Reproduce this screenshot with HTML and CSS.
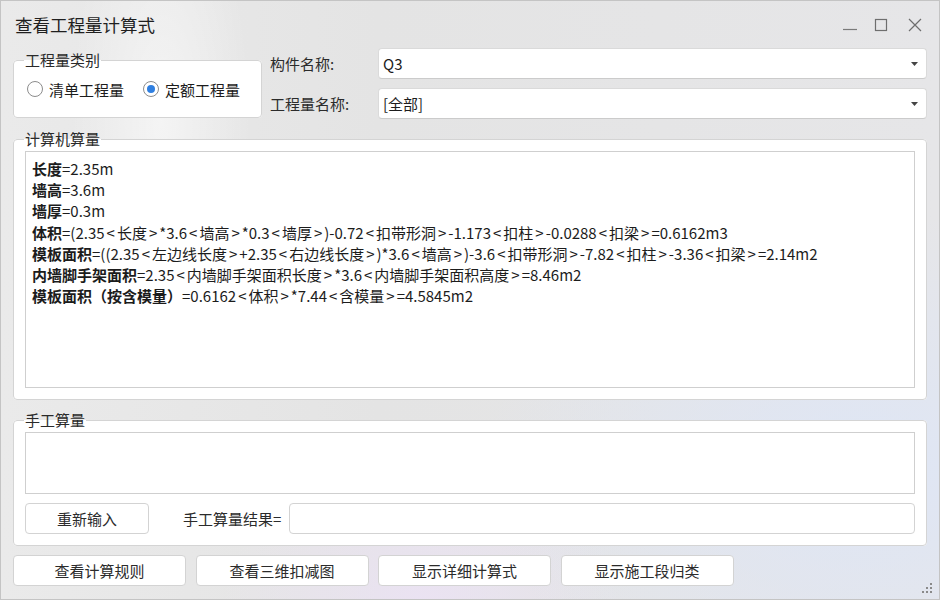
FILE: index.html
```html
<!DOCTYPE html>
<html lang="zh-CN">
<head>
<meta charset="utf-8">
<title>查看工程量计算式</title>
<link rel="stylesheet" href="styles.css">
</head>
<body>
<div class="window">
  <div class="titlebar">
    <span class="title">查看工程量计算式</span>
    <div class="controls">
      <svg class="ctl ctl-min" width="14" height="14" viewBox="0 0 14 14"><path d="M0 11.5H14" stroke="#7a7a7a" stroke-width="1.2" fill="none"/></svg>
      <svg class="ctl ctl-max" width="14" height="14" viewBox="0 0 14 14"><rect x="1.5" y="1.5" width="11" height="11" stroke="#6e6e6e" stroke-width="1.2" fill="none"/></svg>
      <svg class="ctl ctl-close" width="14" height="14" viewBox="0 0 14 14"><path d="M1 1L13 13M13 1L1 13" stroke="#6e6e6e" stroke-width="1.2" fill="none"/></svg>
    </div>
  </div>

  <div class="top">
    <fieldset class="group type-group">
      <legend>工程量类别</legend>
      <div class="radios">
        <label class="radio"><span class="dot"></span>清单工程量</label>
        <label class="radio checked"><span class="dot"></span>定额工程量</label>
      </div>
    </fieldset>
    <div class="fields">
      <div class="field">
        <span class="flabel">构件名称:</span>
        <div class="select"><span>Q3</span><svg class="arrow" width="7" height="4" viewBox="0 0 7 4"><path d="M0 0H7L3.5 4Z" fill="#444"/></svg></div>
      </div>
      <div class="field">
        <span class="flabel">工程量名称:</span>
        <div class="select"><span>[全部]</span><svg class="arrow" width="7" height="4" viewBox="0 0 7 4"><path d="M0 0H7L3.5 4Z" fill="#444"/></svg></div>
      </div>
    </div>
  </div>

  <fieldset class="group calc">
    <legend>计算机算量</legend>
    <div class="textbox calc-box">
      <div class="line"><b>长度</b>=2.35m</div>
      <div class="line"><b>墙高</b>=3.6m</div>
      <div class="line"><b>墙厚</b>=0.3m</div>
      <div class="line"><b>体积</b>=(2.35<span class="ab">&lt;</span>长度<span class="ab">&gt;</span>*3.6<span class="ab">&lt;</span>墙高<span class="ab">&gt;</span>*0.3<span class="ab">&lt;</span>墙厚<span class="ab">&gt;</span>)-0.72<span class="ab">&lt;</span>扣带形洞<span class="ab">&gt;</span>-1.173<span class="ab">&lt;</span>扣柱<span class="ab">&gt;</span>-0.0288<span class="ab">&lt;</span>扣梁<span class="ab">&gt;</span>=0.6162m3</div>
      <div class="line"><b>模板面积</b>=((2.35<span class="ab">&lt;</span>左边线长度<span class="ab">&gt;</span>+2.35<span class="ab">&lt;</span>右边线长度<span class="ab">&gt;</span>)*3.6<span class="ab">&lt;</span>墙高<span class="ab">&gt;</span>)-3.6<span class="ab">&lt;</span>扣带形洞<span class="ab">&gt;</span>-7.82<span class="ab">&lt;</span>扣柱<span class="ab">&gt;</span>-3.36<span class="ab">&lt;</span>扣梁<span class="ab">&gt;</span>=2.14m2</div>
      <div class="line"><b>内墙脚手架面积</b>=2.35<span class="ab">&lt;</span>内墙脚手架面积长度<span class="ab">&gt;</span>*3.6<span class="ab">&lt;</span>内墙脚手架面积高度<span class="ab">&gt;</span>=8.46m2</div>
      <div class="line"><b>模板面积（按含模量）</b>=0.6162<span class="ab">&lt;</span>体积<span class="ab">&gt;</span>*7.44<span class="ab">&lt;</span>含模量<span class="ab">&gt;</span>=4.5845m2</div>
    </div>
  </fieldset>

  <fieldset class="group manual">
    <legend>手工算量</legend>
    <div class="textbox manual-box"></div>
    <div class="manual-row">
      <button class="btn reinput">重新输入</button>
      <span class="result-label">手工算量结果=</span>
      <div class="input"></div>
    </div>
  </fieldset>

  <div class="actions">
    <button class="btn action">查看计算规则</button>
    <button class="btn action">查看三维扣减图</button>
    <button class="btn action">显示详细计算式</button>
    <button class="btn action">显示施工段归类</button>
  </div>

  <svg class="grip" width="10" height="10" viewBox="0 0 10 10">
    <rect x="8" y="0" width="2" height="2" fill="#8a8a8a"/>
    <rect x="4" y="4" width="2" height="2" fill="#8a8a8a"/>
    <rect x="8" y="4" width="2" height="2" fill="#8a8a8a"/>
    <rect x="0" y="8" width="2" height="2" fill="#8a8a8a"/>
    <rect x="4" y="8" width="2" height="2" fill="#8a8a8a"/>
    <rect x="8" y="8" width="2" height="2" fill="#8a8a8a"/>
  </svg>
</div>
</body>
</html>
```

FILE: styles.css
```css
* { box-sizing: border-box; }

html, body {
  margin: 0;
  padding: 0;
  width: 940px;
  height: 600px;
  overflow: hidden;
}

body {
  font-family: "Noto Sans CJK SC", "Noto Sans", sans-serif;
  font-size: 15px;
  color: #1c1c1c;
}

.window {
  position: relative;
  width: 940px;
  height: 600px;
  border: 1px solid #c4c4c4;
  padding: 0 12px;
  display: flex;
  flex-direction: column;
  background:
    radial-gradient(ellipse 90px 260px at 160px 120px, rgba(255,255,255,0.55), rgba(255,255,255,0) 100%),
    radial-gradient(ellipse 380px 260px at 860px 470px, rgba(222,230,246,0.95), rgba(222,230,246,0) 100%),
    radial-gradient(ellipse 200px 140px at 420px 600px, rgba(236,226,246,0.8), rgba(236,226,246,0) 100%),
    linear-gradient(90deg, #eaeaea 0%, #e4e4e4 40%, #e6e6e8 100%);
}

/* title bar */
.titlebar {
  height: 47px;
  display: flex;
  align-items: center;
  justify-content: space-between;
  padding-left: 2px;
}
.title {
  font-size: 17.5px;
  color: #1f1f1f;
}
.controls {
  display: flex;
  align-items: center;
  margin-right: 5px;
  margin-top: 1px;
}
.ctl { display: block; }
.ctl-min { margin-right: 17px; }
.ctl-max { margin-right: 20px; }

/* group boxes */
.group {
  margin: 0;
  min-width: 0;
  border: 1px solid #d4d4d4;
  border-radius: 4px;
  background: #ffffff;
  padding: 2px 11px 11px 11px;
}
.group legend {
  padding: 0 1px;
  margin-left: -1px;
  line-height: 20px;
  font-size: 15px;
  color: #2a2a2a;
}

/* top section */
.top {
  display: flex;
  align-items: flex-start;
}
.type-group {
  width: 249px;
  margin-top: 2px;
  padding: 9px 11px 18px 11px;
}
.radios {
  display: flex;
  align-items: center;
  height: 20px;
}
.radio {
  display: flex;
  align-items: center;
  color: #1c1c1c;
}
.radio:first-child { margin-left: 2px; margin-right: 19px; }
.dot {
  width: 16px;
  height: 16px;
  border-radius: 50%;
  border: 1px solid #8c8c8c;
  background: #fff;
  margin-right: 6px;
  display: flex;
  align-items: center;
  justify-content: center;
}
.checked .dot::after {
  content: "";
  width: 8px;
  height: 8px;
  border-radius: 50%;
  background: #2f7fe0;
}

.fields {
  flex: 1;
  margin-left: 8px;
  display: flex;
  flex-direction: column;
  gap: 9px;
}
.field {
  display: flex;
  align-items: center;
}
.flabel {
  width: 108px;
  color: #2b2b2b;
}
.select {
  flex: 1;
  height: 31px;
  background: #fff;
  border: 1px solid #dadada;
  border-bottom-color: #cbcbcb;
  border-radius: 4px;
  display: flex;
  align-items: center;
  justify-content: space-between;
  padding: 0 8px 0 4px;
  color: #1c1c1c;
}
.arrow { display: block; margin-top: 1px; }

/* calculation area */
.calc {
  margin-top: 10px;
}
.textbox {
  background: #fff;
  border: 1px solid #cfcfcf;
}
.calc-box {
  height: 237px;
  padding: 6px 6px;
}
.line {
  line-height: 21.2px;
  white-space: nowrap;
  color: #1c1c1c;
}
.line b {
  font-weight: 700;
}
.ab {
  padding: 0 2px;
}

/* manual area */
.manual {
  margin-top: 10px;
}
.manual-box {
  height: 62px;
}
.manual-row {
  display: flex;
  align-items: center;
  margin-top: 9px;
}
.btn {
  font-family: inherit;
  font-size: 15px;
  color: #2b2b2b;
  background: #fff;
  border: 1px solid #d3d3d3;
  border-radius: 4px;
  height: 31px;
  padding: 0;
  cursor: default;
}
.reinput {
  width: 124px;
}
.result-label {
  margin-left: 34px;
  margin-right: 8px;
  color: #2b2b2b;
}
.input {
  flex: 1;
  height: 31px;
  background: #fff;
  border: 1px solid #d3d3d3;
  border-radius: 4px;
}

/* bottom buttons */
.actions {
  display: flex;
  gap: 9.5px;
  margin-top: 9px;
}
.action {
  width: 173px;
}

.grip {
  position: absolute;
  right: 7px;
  bottom: 6px;
}
```
